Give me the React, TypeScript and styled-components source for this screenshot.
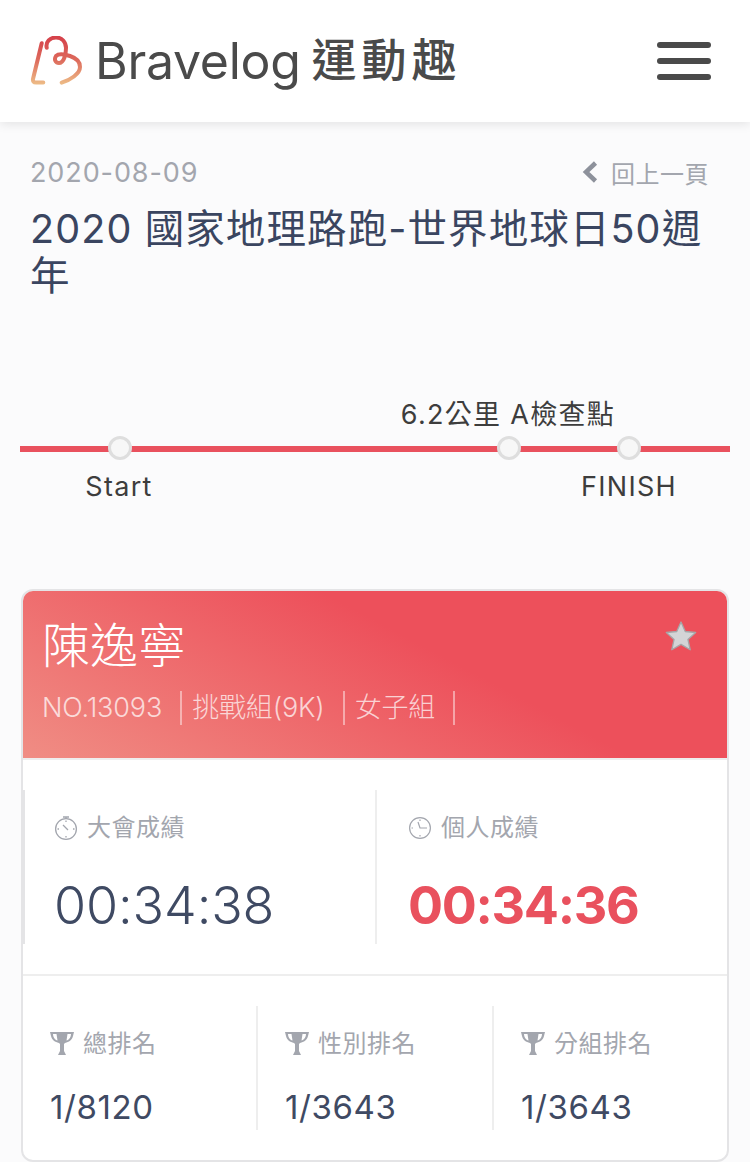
import React from 'react';
import styled, { createGlobalStyle } from 'styled-components';

const GlobalStyle = createGlobalStyle`
  html, body {
    margin: 0;
    padding: 0;
    background: #fbfbfc;
    font-family: Inter, "Noto Sans CJK TC", sans-serif;
  }
  * { box-sizing: border-box; }
`;

const Page = styled.div`
  width: 750px;
  height: 1162px;
  overflow: hidden;
  background: #fbfbfc;
`;

const Header = styled.header`
  height: 122px;
  padding: 0 39px 0 30px;
  display: flex;
  align-items: center;
  justify-content: space-between;
  background: #fff;
  box-shadow: 0 2px 10px rgba(0, 0, 0, 0.1);
`;

const Logo = styled.div`
  display: flex;
  align-items: center;
`;

const LogoWord = styled.span`
  margin-left: 13px;
  font-size: 50px;
  line-height: 60px;
  letter-spacing: -0.3px;
  color: #4a4a4a;
  font-weight: 400;
`;

const LogoCjk = styled.span`
  margin-left: 11px;
  font-size: 45px;
  letter-spacing: 5px;
  line-height: 60px;
  color: #4a4a4a;
  font-weight: 500;
`;

const Burger = styled.div`
  width: 54px;
  display: flex;
  flex-direction: column;
  gap: 10px;
  span {
    display: block;
    height: 6px;
    border-radius: 3px;
    background: #4a4a4a;
  }
`;

const Intro = styled.section`
  padding: 34px 41px 0 30px;
`;

const MetaRow = styled.div`
  display: flex;
  justify-content: space-between;
  align-items: center;
  height: 32px;
`;

const DateText = styled.span`
  font-size: 27px;
  letter-spacing: 0.9px;
  color: #a3a6ae;
`;

const Back = styled.span`
  display: flex;
  align-items: center;
  gap: 13px;
  font-size: 24px;
  letter-spacing: 0.5px;
  color: #a3a6ae;
`;

const Title = styled.h1`
  margin: 18px 0 0;
  font-size: 39.5px;
  line-height: 47px;
  font-weight: 400;
  letter-spacing: 1.1px;
  color: #3a4560;
  width: 680px;
`;

const Track = styled.div`
  position: relative;
  margin: 107px 20px 0;
  height: 110px;
`;

const Line = styled.div`
  position: absolute;
  left: 0;
  right: 0;
  top: 39px;
  height: 6px;
  background: #e9515e;
`;

const Pin = styled.div<{ $x: number }>`
  position: absolute;
  left: ${p => p.$x}px;
  top: 29px;
  width: 24px;
  height: 24px;
  margin-left: -12px;
  border-radius: 50%;
  border: 3px solid #dedede;
  background: #f7f7f7;
`;

const PinLabel = styled.span<{ $x: number; $top: number }>`
  position: absolute;
  left: ${p => p.$x}px;
  top: ${p => p.$top}px;
  transform: translateX(-50%);
  white-space: nowrap;
  font-size: 27px;
  line-height: 32px;
  letter-spacing: 1.3px;
  color: #3d3d3d;
`;

const Card = styled.article`
  margin: 72px 21px 0;
  height: 573px;
  background: #fff;
  border: 2px solid #e4e4e6;
  border-radius: 12px;
  overflow: hidden;
`;

const CardHead = styled.div`
  position: relative;
  height: 169px;
  padding: 22px 19px 0;
  background: linear-gradient(28deg, #f08d84 0%, #ed505b 60%, #ed505b 100%);
  border-bottom: 2px solid #eeeeee;
`;

const Name = styled.h2`
  margin: 0;
  font-size: 48px;
  line-height: 66px;
  font-weight: 300;
  color: #fff;
`;

const Tags = styled.div`
  display: flex;
  margin-top: 12px;
  height: 34px;
`;

const Tag = styled.span`
  display: flex;
  align-items: center;
  font-size: 27px;
  line-height: 34px;
  font-weight: 300;
  letter-spacing: -0.15px;
  padding-right: 18px;
  margin-right: 10px;
  border-right: 2px solid rgba(255, 255, 255, 0.45);
  color: rgba(255, 255, 255, 0.72);
`;

const Star = styled.svg`
  position: absolute;
  right: 30px;
  top: 29px;
  width: 32px;
  height: 32px;
`;

const Results = styled.div`
  display: grid;
  grid-template-columns: 354px 1fr;
  padding: 30px 0;
  border-bottom: 2px solid #eeeeee;
`;

const ResultCell = styled.div<{ $first?: boolean }>`
  height: 154px;
  padding: 22px 0 0 ${p => (p.$first ? 29 : 31)}px;
  border-left: ${p => (p.$first ? '2px solid #e4e4e6' : '0')};
  border-right: ${p => (p.$first ? '2px solid #eeeeee' : '0')};
`;

const Label = styled.div`
  display: flex;
  align-items: center;
  gap: 9px;
  font-size: 24px;
  line-height: 32px;
  letter-spacing: 0.5px;
  color: #a3a6ae;
`;

const Time = styled.div<{ $accent?: boolean }>`
  margin-top: 32px;
  font-size: 52px;
  line-height: 60px;
  letter-spacing: ${p => (p.$accent ? '-1.3px' : '-0.1px')};
  font-weight: ${p => (p.$accent ? 700 : 300)};
  color: ${p => (p.$accent ? '#e9515e' : '#3f4a63')};
`;

const Ranks = styled.div`
  display: grid;
  grid-template-columns: 235px 236px 1fr;
  padding-top: 30px;
`;

const RankCell = styled.div<{ $last?: boolean }>`
  height: 124px;
  padding: 22px 0 0 27px;
  border-right: ${p => (p.$last ? '0' : '2px solid #eeeeee')};
`;

const RankValue = styled.div`
  margin-top: 27px;
  font-size: 33px;
  line-height: 40px;
  letter-spacing: 0.6px;
  color: #3f4a63;
`;

const Mark = () => (
  <svg width="52" height="50" viewBox="0 0 52 50" fill="none" strokeWidth="4" strokeLinecap="round" strokeLinejoin="round">
    <defs>
      <linearGradient id="logoGrad" gradientUnits="userSpaceOnUse" x1="0" y1="0" x2="0" y2="48">
        <stop offset="0" stopColor="#d5404a" />
        <stop offset="0.5" stopColor="#dd6a5c" />
        <stop offset="1" stopColor="#edbb86" />
      </linearGradient>
    </defs>
    <path
      d="M11.700 7.300 L3 43 Q2.500 46.500 6 46.500 L13.300 46.500 M16.700 11.700 C15.500 6 20 1.500 26 1.500 C32 1.500 36 6 36 12 C36 18 34 27 29 27 C25 27 24 23 26 20 C29 17 34 18 40 20 C46 22 50 26 50 31 C50 38 40 44 31.700 46.700"
      stroke="url(#logoGrad)"
    />
  </svg>
);

const Chevron = () => (
  <svg width="16" height="24" viewBox="0 0 16 24" fill="none">
    <path d="M13.500 3 L4 12 L13.500 21" stroke="#8d919b" strokeWidth="4.500" />
  </svg>
);

const Stopwatch = () => (
  <svg width="24" height="26" viewBox="0 0 24 26" fill="none" stroke="#a3a6ae" strokeWidth="1.3">
    <circle cx="12" cy="14" r="10.400" />
    <path d="M9 2 H15 M12 2 V4 M9 10 L14 15 M12 5.500 V7 M12 21 V22.500 M3.500 14 H5 M19 14 H20.500" />
  </svg>
);

const Clock = () => (
  <svg width="24" height="24" viewBox="0 0 24 24" fill="none" stroke="#a3a6ae" strokeWidth="1.200">
    <circle cx="12" cy="12" r="10.400" />
    <path d="M10 6 L12 12 H19 M12 3.500 V5 M12 19 V20.500 M3.500 12 H5" />
  </svg>
);

const Trophy = () => (
  <svg width="24" height="24" viewBox="0 0 24 24" fill="#a3a6ae">
    <path d="M0 0 H24 L23 4 C22 8 19 10 15 11 L14 12 V19 L16 23 H8 L10 19 V12 L9 11 C5 10 2 8 1 4 Z M3 2 C3 5 5 8 7.500 8.500 L6.500 2 Z M21 2 H17.500 L16.500 8.500 C19 8 21 5 21 2 Z" fillRule="evenodd" />
  </svg>
);

const ranks = [
  { label: '總排名', value: '1/8120' },
  { label: '性別排名', value: '1/3643' },
  { label: '分組排名', value: '1/3643' },
];

export default function App() {
  return (
    <Page>
      <GlobalStyle />
      <Header>
        <Logo>
          <Mark />
          <LogoWord>Bravelog</LogoWord>
          <LogoCjk>運動趣</LogoCjk>
        </Logo>
        <Burger>
          <span />
          <span />
          <span />
        </Burger>
      </Header>

      <Intro>
        <MetaRow>
          <DateText>2020-08-09</DateText>
          <Back>
            <Chevron />
            回上一頁
          </Back>
        </MetaRow>
        <Title>2020 國家地理路跑-世界地球日50週年</Title>
      </Intro>

      <Track>
        <PinLabel $x={488} $top={-8}>6.2公里 A檢查點</PinLabel>
        <Line />
        <Pin $x={100} />
        <Pin $x={489} />
        <Pin $x={609} />
        <PinLabel $x={99} $top={64}>Start</PinLabel>
        <PinLabel $x={609} $top={64}>FINISH</PinLabel>
      </Track>

      <Card>
        <CardHead>
          <Name>陳逸寧</Name>
          <Tags>
            <Tag>NO.13093</Tag>
            <Tag>挑戰組(9K)</Tag>
            <Tag>女子組</Tag>
          </Tags>
          <Star viewBox="0 0 24 24">
            <path
              d="M12 1.500 L15.200 8.600 L23 9.400 L17.200 14.600 L18.900 22.300 L12 18.300 L5.100 22.300 L6.800 14.600 L1 9.400 L8.800 8.600 Z"
              fill="#d4d4d6"
              stroke="#a6a6a8"
              strokeWidth="1"
              strokeLinejoin="round"
            />
          </Star>
        </CardHead>

        <Results>
          <ResultCell $first>
            <Label>
              <Stopwatch />
              大會成績
            </Label>
            <Time>00:34:38</Time>
          </ResultCell>
          <ResultCell>
            <Label>
              <Clock />
              個人成績
            </Label>
            <Time $accent>00:34:36</Time>
          </ResultCell>
        </Results>

        <Ranks>
          {ranks.map((rank, i) => (
            <RankCell key={rank.label} $last={i === ranks.length - 1}>
              <Label>
                <Trophy />
                {rank.label}
              </Label>
              <RankValue>{rank.value}</RankValue>
            </RankCell>
          ))}
        </Ranks>
      </Card>
    </Page>
  );
}
